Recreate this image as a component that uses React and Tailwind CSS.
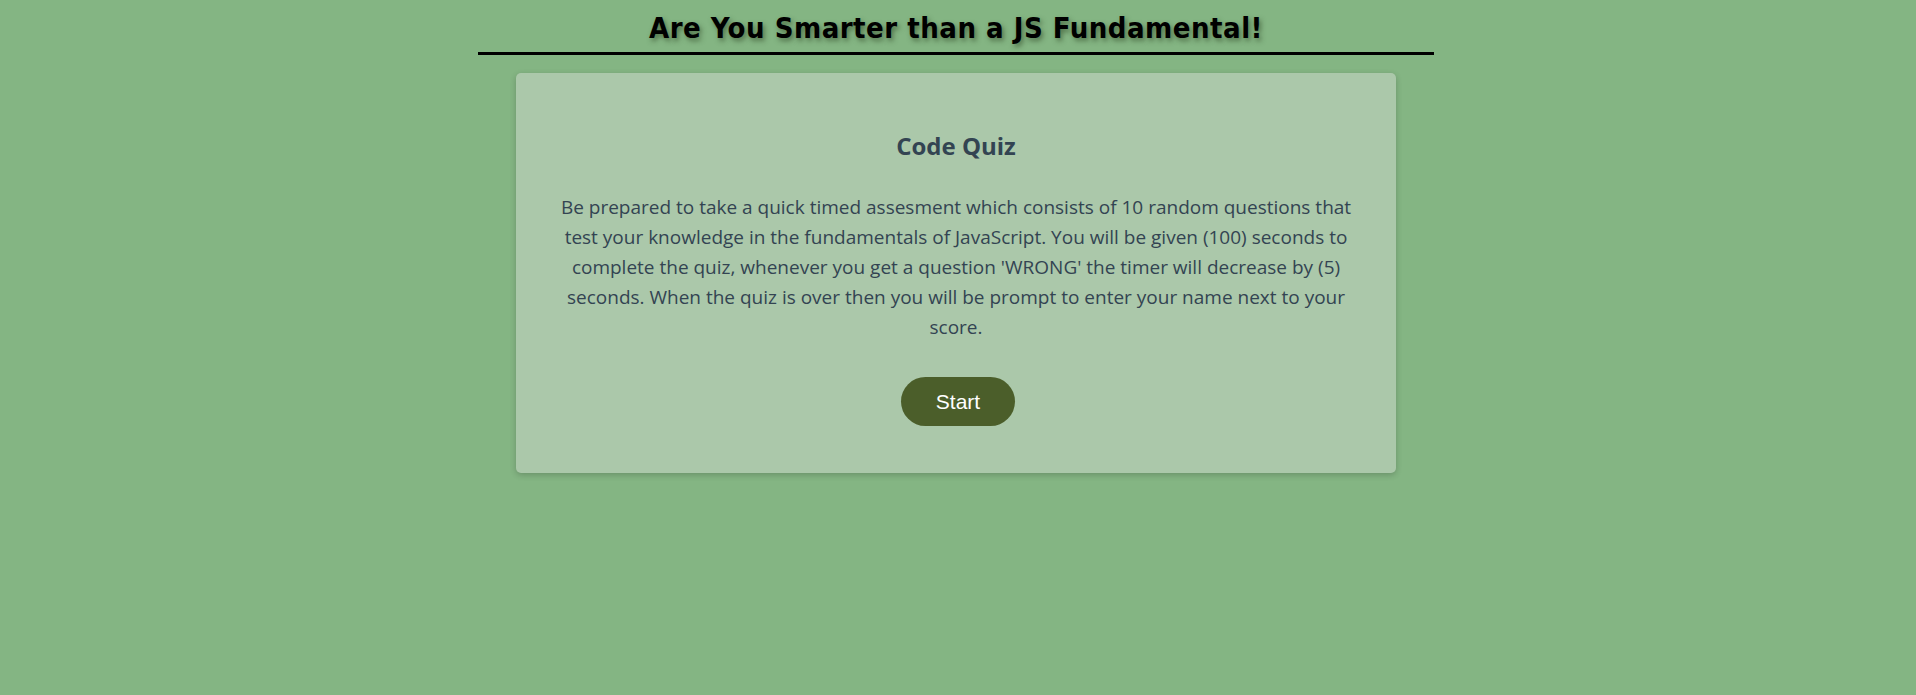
import React from "react";

const App = () => {
  return (
    <div className="min-h-screen bg-[#84b583] pr-[4px] font-['Open_Sans',sans-serif]">
      <header className="w-1/2 mx-auto border-b-[3px] border-black pt-[4px] text-center">
        <h1 className="text-[29px] leading-[48px] tracking-[0.5px] font-bold text-black font-['DejaVu_Sans_Condensed','DejaVu_Sans',sans-serif] [text-shadow:2px_3px_5px_rgba(40,60,30,0.55)]">
          Are You Smarter than a JS Fundamental!
        </h1>
      </header>

      <main className="w-[880px] mx-auto mt-[18px] bg-[#abc8aa] rounded-[5px] shadow-[0_2px_6px_rgba(0,0,0,0.2)] px-[40px] pt-[58px] pb-[47px] text-center text-[#334452]">
        <h2 className="text-[24px] leading-[30px] font-bold">Code Quiz</h2>
        <p className="mt-[31px] text-[19px] leading-[30px]">
          Be prepared to take a quick timed assesment which consists of 10 random questions that test your knowledge in the fundamentals of JavaScript. You will be given (100) seconds to complete the quiz, whenever you get a question 'WRONG' the timer will decrease by (5) seconds. When the quiz is over then you will be prompt to enter your name next to your score.
        </p>
        <button className="mt-[35px] ml-[4px] w-[114px] h-[49px] rounded-full bg-[#4b5e2a] text-white text-[21px] font-['Liberation_Sans',sans-serif]">
          Start
        </button>
      </main>
    </div>
  );
};

export default App;
